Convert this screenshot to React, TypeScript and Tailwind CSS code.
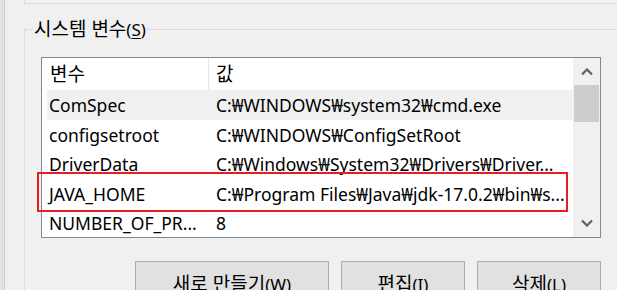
import React from "react";

const rows = [
  { name: "ComSpec", value: "C:₩WINDOWS₩system32₩cmd.exe", hover: true },
  { name: "configsetroot", value: "C:₩WINDOWS₩ConfigSetRoot" },
  { name: "DriverData", value: "C:₩Windows₩System32₩Drivers₩Driver..." },
  { name: "JAVA_HOME", value: "C:₩Program Files₩Java₩jdk-17.0.2₩bin₩s..." },
  { name: "NUMBER_OF_PR...", value: "8" },
];

// Hangul in the reference (Malgun Gothic) runs larger than the Latin text
const K: React.FC<{ children: React.ReactNode }> = ({ children }) => (
  <span className="text-[19px]">{children}</span>
);

const Chevron: React.FC<{ down?: boolean }> = ({ down }) => (
  <svg width="12" height="8" viewBox="0 0 12 8" className="block">
    <path
      d={down ? "M1 1.5 L6 6.5 L11 1.5" : "M1 6.5 L6 1.5 L11 6.5"}
      fill="none"
      stroke="#606060"
      strokeWidth="2.2"
    />
  </svg>
);

const WinButton: React.FC<{ label: string; hotkey: string; width: string }> = ({
  label,
  hotkey,
  width,
}) => (
  <button
    type="button"
    className={`${width} h-[46px] bg-[#e1e1e1] border border-[#adadad] flex items-center justify-center text-[17px] leading-none text-black`}
  >
    <K>{label}</K>(<span className="underline underline-offset-2">{hotkey}</span>)
  </button>
);

export default function App() {
  return (
    <div
      className="w-[617px] h-[290px] overflow-hidden bg-[#f0f0f0] flex text-black"
      style={{ fontFamily: "'Noto Sans', 'Noto Sans CJK KR', sans-serif" }}
    >
      {/* window edge */}
      <div className="w-[5px] h-full bg-[#e2e2e2] border-r border-[#cfcfcf] shrink-0" />

      <div className="flex-1 pl-[19px]">
        {/* bottom of the user variables group */}
        <div className="h-[4px] border-l border-b border-[#dcdcdc]" />

        {/* system variables group */}
        <div className="relative mt-[25px] border-l border-t border-[#dcdcdc] pl-[16px] pt-[27px]">
          <span className="absolute left-[8px] top-[-14px] bg-[#f0f0f0] px-[1px] text-[17px] leading-[26px] whitespace-nowrap">
            <K>시스템 변수</K>(<span className="underline underline-offset-2">S</span>)
          </span>

          <div className="relative w-[560px] h-[181px] border border-[#828790] bg-white flex">
            <div className="flex-1 flex flex-col">
              {/* header */}
              <div className="h-[32px] flex shrink-0 leading-none">
                <div className="w-[167px] border-r border-[#e5e5e5] pl-[8px] flex items-center">
                  <K>변수</K>
                </div>
                <div className="pl-[7px] flex items-center">
                  <K>값</K>
                </div>
              </div>
              <div className="pl-[5px] flex flex-col">
                {rows.map((r) => (
                  <div
                    key={r.name}
                    className={`h-[29.5px] flex items-center text-[17.5px] pl-[2px] pt-[1px] whitespace-nowrap ${
                      r.hover ? "bg-[#f0f0f0]" : ""
                    }`}
                  >
                    <div className="w-[167px]">{r.name}</div>
                    <div>{r.value}</div>
                  </div>
                ))}
              </div>
            </div>

            {/* scrollbar */}
            <div className="w-[27px] bg-[#f0f0f0] flex flex-col items-center shrink-0">
              <div className="h-[27px] flex items-center justify-center">
                <Chevron />
              </div>
              <div className="w-[25px] h-[37px] bg-[#cdcdcd]" />
              <div className="flex-1" />
              <div className="h-[28px] flex items-center justify-center">
                <Chevron down />
              </div>
            </div>

            {/* red annotation box */}
            <div className="absolute left-[-5px] top-[114px] w-[531px] h-[40px] border-2 border-[#e81c24]" />
          </div>

          <div className="w-[560px] flex justify-end gap-[12px] mt-[23px]">
            <WinButton label="새로 만들기" hotkey="W" width="w-[194px]" />
            <WinButton label="편집" hotkey="I" width="w-[124px]" />
            <WinButton label="삭제" hotkey="L" width="w-[124px]" />
          </div>
        </div>
      </div>
    </div>
  );
}
